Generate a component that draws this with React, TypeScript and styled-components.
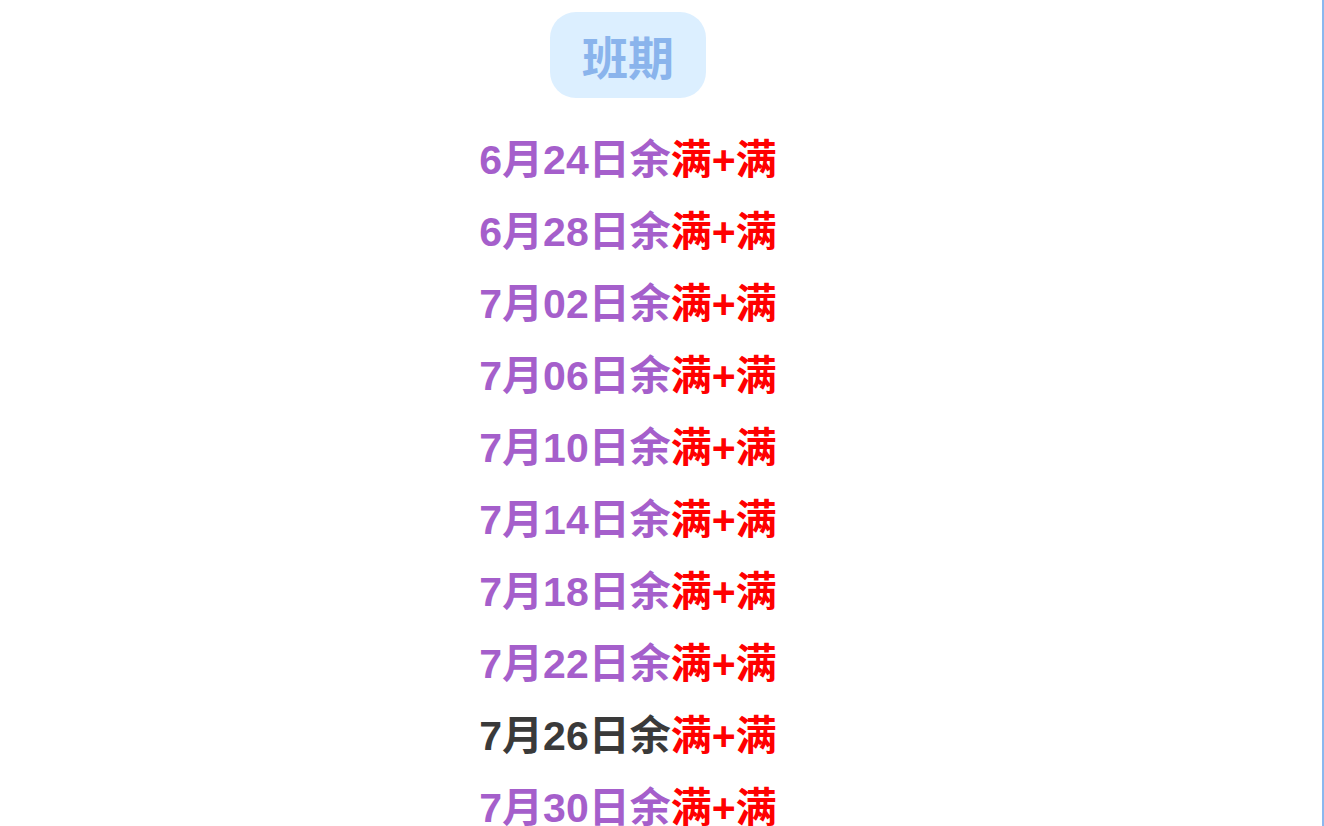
import React from "react";
import styled, { createGlobalStyle } from "styled-components";

const Global = createGlobalStyle`
  html, body { margin: 0; padding: 0; background: #ffffff; }
  body { font-family: "Liberation Sans", "Noto Sans CJK SC", sans-serif; }
`;

const Page = styled.div`
  display: flex;
  width: 1322px;
  height: 826px;
  overflow: hidden;
  border-right: 2px solid #8ab8ee;
`;

const Column = styled.div`
  width: 1256px;
  display: flex;
  flex-direction: column;
  align-items: center;
  padding-top: 12px;
`;

const Badge = styled.div`
  flex-shrink: 0;
  width: 156px;
  height: 86px;
  border-radius: 26px;
  background: #dcefff;
  color: #8ab4ec;
  font-size: 46px;
  font-weight: bold;
  display: flex;
  align-items: center;
  justify-content: center;
  margin-bottom: 26px;
`;

const List = styled.ul`
  flex-shrink: 0;
  list-style: none;
  margin: 0;
  padding: 0;
  display: flex;
  flex-direction: column;
  align-items: center;
`;

const Row = styled.li<{ $dark?: boolean }>`
  font-size: 41px;
  font-weight: bold;
  line-height: 72px;
  color: ${(p) => (p.$dark ? "#3a3a3a" : "#a55fcb")};
  white-space: nowrap;
`;

const Full = styled.span`
  color: #ff0000;
`;

const dates = [
  "6月24日",
  "6月28日",
  "7月02日",
  "7月06日",
  "7月10日",
  "7月14日",
  "7月18日",
  "7月22日",
  "7月26日",
  "7月30日",
];

export default function App() {
  return (
    <>
      <Global />
      <Page>
        <Column>
          <Badge>班期</Badge>
          <List>
            {dates.map((d) => (
              <Row key={d} $dark={d === "7月26日"}>
                {d}余<Full>满+满</Full>
              </Row>
            ))}
          </List>
        </Column>
      </Page>
    </>
  );
}
